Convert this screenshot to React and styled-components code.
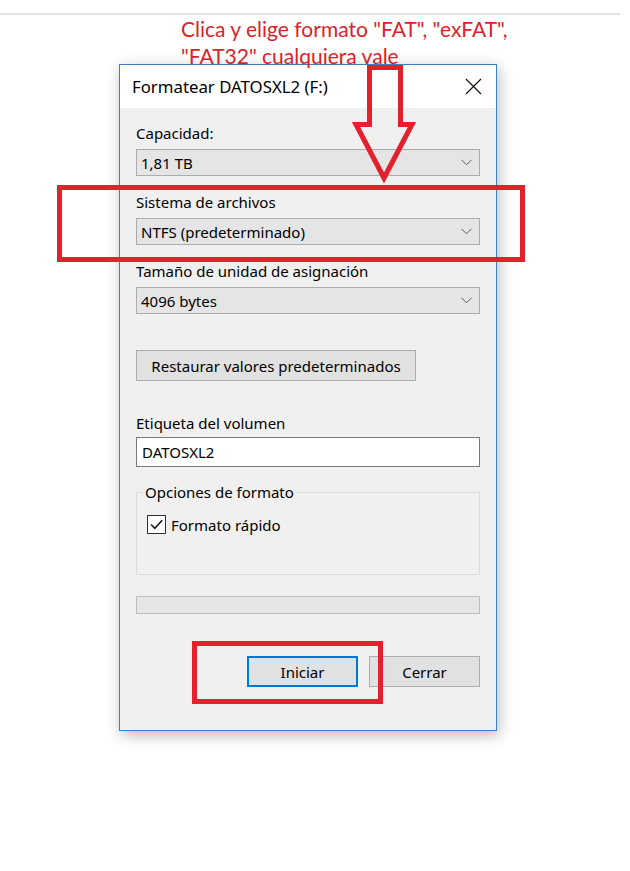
import React from "react";
import styled, { createGlobalStyle } from "styled-components";

const GlobalStyle = createGlobalStyle`
  html, body { margin: 0; padding: 0; background: #ffffff; }
  body { font-family: "Noto Sans", "Open Sans", Arial, sans-serif; }
  * { box-sizing: border-box; }
`;

const RED = "#e3202b";

const Page = styled.div`
  position: relative;
  width: 630px;
  height: 871px;
  padding-top: 13px;
  overflow: hidden;
`;

const TopRule = styled.div`
  width: 620px;
  height: 2px;
  background: #e2e2e2;
`;

const Note = styled.div`
  padding-left: 181px;
  font-family: "Lato", "Open Sans", sans-serif;
  font-size: 21px;
  line-height: 27px;
  color: #d9232c;
  margin-bottom: -5px;
  position: relative;
  z-index: 2;
`;

const Dialog = styled.div`
  margin-left: 119px;
  width: 378px;
  border: 1px solid #3f80c2;
  background: #f0f0f0;
  box-shadow: 2px 4px 14px rgba(0, 0, 0, 0.28);
  display: flex;
  flex-direction: column;
  font-family: "Noto Sans", "Open Sans", sans-serif;
  color: #000;
`;

const TitleBar = styled.div`
  height: 43px;
  background: #ffffff;
  display: flex;
  align-items: center;
  justify-content: space-between;
  padding-left: 12px;
`;

const Title = styled.div`
  font-size: 16.8px;
`;

const CloseBtn = styled.div`
  width: 46px;
  height: 43px;
  display: flex;
  align-items: center;
  justify-content: center;
`;

const Body = styled.div`
  padding: 15px 16px 43px 16px;
  display: flex;
  flex-direction: column;
`;

const Label = styled.div`
  font-size: 15px;
  line-height: 20px;
  height: 20px;
  margin-top: ${(p) => p.$mt || 0}px;
  white-space: nowrap;
`;

const Combo = styled.div`
  margin-top: 6px;
  height: 27px;
  background: #e5e5e5;
  border: 1px solid #acacac;
  display: flex;
  align-items: center;
  justify-content: space-between;
  padding: 0 7px 0 4px;
  font-size: 15px;
`;

const RestoreButton = styled.div`
  margin-top: 36px;
  width: 280px;
  height: 31px;
  background: #e1e1e1;
  border: 1px solid #adadad;
  display: flex;
  align-items: center;
  justify-content: center;
  font-size: 15px;
`;

const TextInput = styled.div`
  margin-top: 4px;
  height: 30px;
  background: #ffffff;
  border: 1px solid #7a7a7a;
  display: flex;
  align-items: center;
  padding-left: 5px;
  font-size: 15px;
`;

const Group = styled.fieldset`
  margin: 15px 0 0 0;
  padding: 13px 6px 40px 6px;
  border: 1px solid #dcdcdc;
  min-width: 0;
`;

const Legend = styled.legend`
  padding: 0 2px;
  font-size: 15px;
  line-height: 20px;
  margin-left: 0;
`;

const CheckRow = styled.div`
  display: flex;
  align-items: center;
  gap: 5px;
  margin-left: 4px;
  font-size: 15px;
  height: 19px;
`;

const CheckBox = styled.div`
  width: 19px;
  height: 19px;
  border: 1px solid #333333;
  background: #ffffff;
  display: flex;
  align-items: center;
  justify-content: center;
`;

const Progress = styled.div`
  margin-top: 21px;
  height: 18px;
  background: #e6e6e6;
  border: 1px solid #bcbcbc;
`;

const ButtonRow = styled.div`
  margin-top: 42px;
  display: flex;
  justify-content: flex-end;
  gap: 11px;
`;

const DlgButton = styled.div`
  width: 111px;
  height: 31px;
  background: #e1e1e1;
  border: ${(p) => (p.$default ? "2px solid #0078d7" : "1px solid #adadad")};
  display: flex;
  align-items: center;
  justify-content: center;
  font-size: 15px;
`;

const RedBox = styled.div`
  position: absolute;
  left: ${(p) => p.$x}px;
  top: ${(p) => p.$y}px;
  width: ${(p) => p.$w}px;
  height: ${(p) => p.$h}px;
  border: 5px solid ${RED};
  pointer-events: none;
`;

const ArrowSvg = styled.svg`
  position: absolute;
  left: 340px;
  top: 60px;
  width: 100px;
  height: 130px;
  overflow: visible;
`;

const Chevron = () => (
  <svg width="11" height="7" viewBox="0 0 11 7">
    <path d="M0.5 0.8 L5.5 5.8 L10.5 0.8" fill="none" stroke="#5a5a5a" strokeWidth="1" />
  </svg>
);

const CloseIcon = () => (
  <svg width="17" height="17" viewBox="0 0 17 17">
    <path d="M1 1 L16 16 M16 1 L1 16" stroke="#111" strokeWidth="1.2" fill="none" />
  </svg>
);

const Check = () => (
  <svg width="15" height="15" viewBox="0 0 15 15">
    <path d="M2 7.5 L5.8 11.3 L13.2 3.2" stroke="#1a1a1a" strokeWidth="1.6" fill="none" />
  </svg>
);

export default function App() {
  return (
    <>
      <GlobalStyle />
      <Page>
        <TopRule />
        <Note>
          Clica y elige formato "FAT", "exFAT",
          <br />
          "FAT32" cualquiera vale
        </Note>
        <Dialog>
          <TitleBar>
            <Title>Formatear DATOSXL2 (F:)</Title>
            <CloseBtn>
              <CloseIcon />
            </CloseBtn>
          </TitleBar>
          <Body>
            <Label>Capacidad:</Label>
            <Combo>
              <span>1,81 TB</span>
              <Chevron />
            </Combo>
            <Label $mt={16}>Sistema de archivos</Label>
            <Combo>
              <span>NTFS (predeterminado)</span>
              <Chevron />
            </Combo>
            <Label $mt={16}>Tamaño de unidad de asignación</Label>
            <Combo>
              <span>4096 bytes</span>
              <Chevron />
            </Combo>
            <RestoreButton>Restaurar valores predeterminados</RestoreButton>
            <Label $mt={32}>Etiqueta del volumen</Label>
            <TextInput>DATOSXL2</TextInput>
            <Group>
              <Legend>Opciones de formato</Legend>
              <CheckRow>
                <CheckBox>
                  <Check />
                </CheckBox>
                <span>Formato rápido</span>
              </CheckRow>
            </Group>
            <Progress />
            <ButtonRow>
              <DlgButton $default>Iniciar</DlgButton>
              <DlgButton>Cerrar</DlgButton>
            </ButtonRow>
          </Body>
        </Dialog>
        <ArrowSvg viewBox="0 0 100 130">
          <polygon
            points="29.5,7.5 60.5,7.5 60.5,64.5 72,64.5 44,118 16,64.5 29.5,64.5"
            fill="none"
            stroke={RED}
            strokeWidth="5"
            strokeLinejoin="miter"
          />
        </ArrowSvg>
        <RedBox $x={57} $y={185} $w={468} $h={77} />
        <RedBox $x={192} $y={641} $w={191} $h={63} />
      </Page>
    </>
  );
}
